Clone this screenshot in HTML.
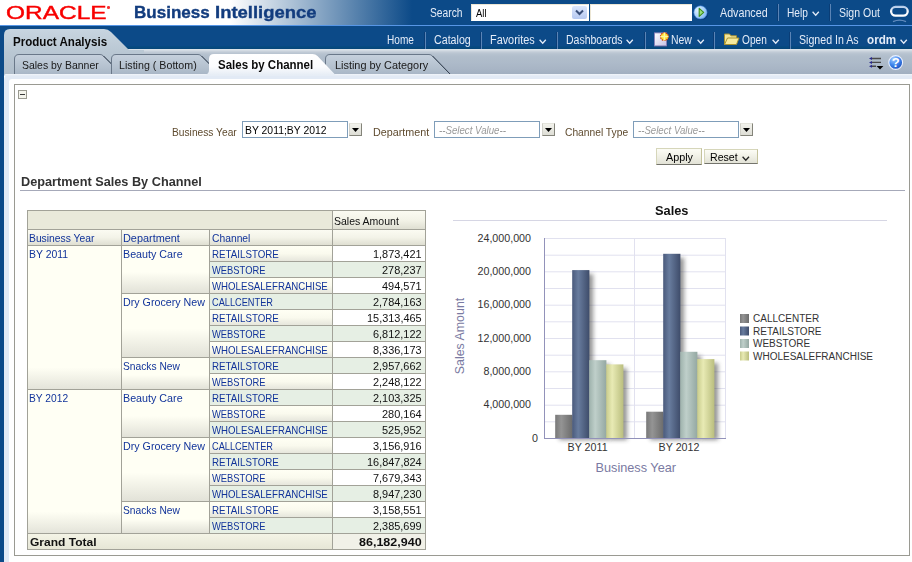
<!DOCTYPE html>
<html><head><meta charset="utf-8"><title>Oracle Business Intelligence</title>
<style>
html,body{margin:0;padding:0;}
body{width:912px;height:562px;position:relative;overflow:hidden;background:#fff;font-family:"Liberation Sans",sans-serif;font-size:11px;color:#000;}
.a{position:absolute;white-space:nowrap;}
.t{position:absolute;white-space:nowrap;line-height:14px;height:14px;transform-origin:0 50%;}
.sep{position:absolute;width:1px;height:17px;background:#5a84b6;box-shadow:-1px 0 0 #0a3d76;}
</style></head>
<body>
<div class="a" style="left:0;top:0;width:912px;height:25px;background:linear-gradient(90deg,#fff 0,#fff 230px,#0c4a88 412px,#0c4a88 912px);"></div>
<div class="a" style="left:0;top:25px;width:912px;height:1px;background:#5796e6;"></div>
<div class="a" style="left:0;top:26px;width:912px;height:23px;background:linear-gradient(#0c4a88 0,#0c4a88 19.5px,#074a82 20.5px,#064678 23px);"></div>
<div class="a" style="left:0;top:26px;width:4px;height:536px;background:#0c4a88;"></div>
<div class="t" id="oracle" style="left:6.0px;top:5.7px;font-size:17.6px;color:#f80000;transform:scaleX(1.390);-webkit-text-stroke:0.4px #f80000;">ORACLE</div>
<div class="a" style="left:107px;top:6px;width:2.6px;height:2.6px;border-radius:50%;background:#f83030;"></div>
<div class="t" id="bi" style="left:134.2px;top:6.0px;font-size:16.8px;color:#123c7e;font-weight:bold;transform:scaleX(1.016);-webkit-text-stroke:0.35px #123c7e;">Business</div>
<div class="t" id="bi2" style="left:215.4px;top:6.0px;font-size:16.8px;color:#123c7e;font-weight:bold;transform:scaleX(1.100);-webkit-text-stroke:0.35px #123c7e;">Intelligence</div>
<div class="t" id="search" style="left:429.5px;top:5.8px;font-size:12px;color:#e4ecf8;transform:scaleX(0.855);">Search</div>
<div class="a" style="left:471px;top:4px;width:118px;height:17px;background:#fff;border:1px solid #ece6d4;border-right-color:#fff;border-bottom-color:#fff;box-sizing:border-box;"></div>
<div class="t" id="all" style="left:476.0px;top:6.2px;font-size:11px;color:#000;transform:scaleX(0.858);">All</div>
<div class="a" style="left:572px;top:6px;width:15px;height:13px;background:linear-gradient(#dde7fc,#b6c9f1);border-radius:2px;"></div>
<svg class="a" style="left:572px;top:6px;" width="15" height="13"><path d="M4 4.5 L7.5 8 L11 4.5" fill="none" stroke="#3a4f7a" stroke-width="2"/></svg>
<div class="a" style="left:590px;top:4px;width:102px;height:17px;background:#fff;border:1px solid #ece6d4;border-right-color:#fff;border-bottom-color:#fff;box-sizing:border-box;"></div>
<svg class="a" style="left:692px;top:4px;" width="18" height="18"><defs><radialGradient id="gb" cx="0.3" cy="0.35" r="0.8"><stop offset="0" stop-color="#dcefff"/><stop offset="0.6" stop-color="#a4d0fa"/><stop offset="1" stop-color="#6aa8ec"/></radialGradient></defs><circle cx="9.2" cy="9.2" r="6.9" fill="#06306a" opacity="0.75"/><circle cx="8.5" cy="8.4" r="6.7" fill="url(#gb)" stroke="#2f74d0" stroke-width="0.6"/><path d="M7.2 4.4 L11.7 8.4 L7.2 12.4 Z" fill="#9be07a" stroke="#3c8e1c" stroke-width="1.1" stroke-linejoin="round"/></svg>
<div class="t" id="adv" style="left:719.8px;top:5.8px;font-size:12px;color:#e4ecf8;transform:scaleX(0.892);">Advanced</div>
<div class="sep" style="left:778px;top:4px;"></div>
<div class="t" id="help" style="left:786.5px;top:5.8px;font-size:12px;color:#e4ecf8;transform:scaleX(0.847);">Help</div>
<svg class="a" style="left:812px;top:11px;" width="9" height="6"><path d="M0.6 0.8 L3.7 4.2 L6.8 0.8" fill="none" stroke="#e4ecf8" stroke-width="1.3"/></svg>
<div class="sep" style="left:830px;top:4px;"></div>
<div class="t" id="signout" style="left:838.8px;top:5.8px;font-size:12px;color:#e4ecf8;transform:scaleX(0.876);">Sign Out</div>
<svg class="a" style="left:888px;top:3px;" width="24" height="21"><defs><linearGradient id="og" x1="0" y1="0" x2="0" y2="1"><stop offset="0" stop-color="#b4cbea"/><stop offset="0.45" stop-color="#f4f7fc"/><stop offset="1" stop-color="#ffffff"/></linearGradient></defs><rect x="3.1" y="3.9" width="16.6" height="8.8" rx="4.4" ry="4.4" fill="none" stroke="url(#og)" stroke-width="2.3"/><path d="M5 18.6 Q11.5 15.6 18 18.6" fill="none" stroke="#7fa2d0" stroke-width="1.4" opacity="0.75"/></svg>
<div class="t" id="home" style="left:387.1px;top:33.4px;font-size:12px;color:#e4ecf8;transform:scaleX(0.840);">Home</div>
<div class="sep" style="left:425px;top:32px;"></div>
<div class="t" id="catalog" style="left:433.5px;top:33.4px;font-size:12px;color:#e4ecf8;transform:scaleX(0.889);">Catalog</div>
<div class="sep" style="left:481px;top:32px;"></div>
<div class="t" id="fav" style="left:489.5px;top:33.4px;font-size:12px;color:#e4ecf8;transform:scaleX(0.906);">Favorites</div>
<svg class="a" style="left:539px;top:39px;" width="9" height="6"><path d="M0.6 0.8 L3.7 4.2 L6.8 0.8" fill="none" stroke="#e4ecf8" stroke-width="1.3"/></svg>
<div class="sep" style="left:557px;top:32px;"></div>
<div class="t" id="dash" style="left:565.6px;top:33.4px;font-size:12px;color:#e4ecf8;transform:scaleX(0.875);">Dashboards</div>
<svg class="a" style="left:626px;top:39px;" width="9" height="6"><path d="M0.6 0.8 L3.7 4.2 L6.8 0.8" fill="none" stroke="#e4ecf8" stroke-width="1.3"/></svg>
<div class="sep" style="left:645px;top:32px;"></div>
<svg class="a" style="left:653px;top:31px;" width="17" height="17"><defs><linearGradient id="dg" x1="0" y1="0" x2="1" y2="1"><stop offset="0" stop-color="#fff"/><stop offset="1" stop-color="#c4c0e4"/></linearGradient></defs><rect x="2.5" y="3.5" width="12" height="12.5" fill="#1d2f5c" opacity="0.35"/><rect x="1.5" y="1.9" width="12" height="13" fill="url(#dg)" stroke="#8a80b8" stroke-width="0.9"/><circle cx="11.4" cy="5.6" r="3.9" fill="#ffdf2a" stroke="#c8321a" stroke-width="1.2" stroke-dasharray="1.5 0.9"/><path d="M11.4 1.6V9.6M7.4 5.6H15.4" stroke="#fff8a0" stroke-width="1.5"/></svg>
<div class="t" id="new" style="left:671.3px;top:33.4px;font-size:12px;color:#e4ecf8;transform:scaleX(0.870);">New</div>
<svg class="a" style="left:696.7px;top:39px;" width="9" height="6"><path d="M0.6 0.8 L3.7 4.2 L6.8 0.8" fill="none" stroke="#e4ecf8" stroke-width="1.3"/></svg>
<div class="sep" style="left:714px;top:32px;"></div>
<svg class="a" style="left:723px;top:31px;" width="18" height="16"><path d="M1.5 13.5 V3 H6.5 L8 4.8 H13.5 V7" fill="#f3e59a" stroke="#a8922e" stroke-width="1"/><path d="M1.5 13.5 L4.5 7 H16 L13.5 13.5 Z" fill="#f6ea9e" stroke="#a8922e" stroke-width="1"/></svg>
<div class="t" id="open" style="left:742.0px;top:33.4px;font-size:12px;color:#e4ecf8;transform:scaleX(0.845);">Open</div>
<svg class="a" style="left:771.5px;top:39px;" width="9" height="6"><path d="M0.6 0.8 L3.7 4.2 L6.8 0.8" fill="none" stroke="#e4ecf8" stroke-width="1.3"/></svg>
<div class="sep" style="left:790px;top:32px;"></div>
<div class="t" id="signed" style="left:798.7px;top:33.4px;font-size:12px;color:#e4ecf8;transform:scaleX(0.884);">Signed In As</div>
<div class="t" id="ordm" style="left:866.7px;top:33.3px;font-size:12.5px;color:#e4ecf8;font-weight:bold;transform:scaleX(0.934);">ordm</div>
<svg class="a" style="left:900px;top:39px;" width="9" height="6"><path d="M0.6 0.8 L3.7 4.2 L6.8 0.8" fill="none" stroke="#e4ecf8" stroke-width="1.3"/></svg>
<div class="a" style="left:4px;top:49px;width:908px;height:26px;background:linear-gradient(#dfe5eb 0,#d3dbe3 1.5px,#c2ccd7 3px,#b6c2cf 5px,#b0bdcb 8px,#adbac9 14px,#a8b5c5 20px,#a1afc0 25px,#a1afc0 26px);"></div>
<svg class="a" style="left:4px;top:28px;" width="140" height="48"><defs><linearGradient id="pa" x1="0" y1="0" x2="0" y2="1"><stop offset="0" stop-color="#c8d5e0"/><stop offset="0.5" stop-color="#b9c7d3"/><stop offset="1" stop-color="#b0bdca"/></linearGradient></defs><path d="M0 48 V7 Q0 1 6 1 H100 Q104 1 107 4 L125 22 H140 V48 Z" fill="url(#pa)"/></svg>
<div class="t" id="prod" style="left:13.1px;top:34.7px;font-size:12px;color:#0a0a0a;font-weight:bold;transform:scaleX(0.964);">Product Analysis</div>
<svg class="a" style="left:14px;top:53px;" width="110" height="22"><defs><linearGradient id="gtb1" x1="0" y1="0" x2="0" y2="1"><stop offset="0" stop-color="#c6d1dd"/><stop offset="0.7" stop-color="#b2bfcd"/><stop offset="1" stop-color="#a7b5c5"/></linearGradient></defs><path d="M0.5 22 V6 Q0.5 1.5 5 1.5 H86 Q88 1.5 89.5 3 L97.5 11 V22 Z" fill="url(#gtb1)" stroke="#6a7889" stroke-width="1"/><path d="M89.5 3 L97.5 11" fill="none" stroke="#2f3b4b" stroke-width="0.9"/></svg>
<div class="t" id="tb1" style="left:22.2px;top:58.2px;font-size:11px;color:#1a1a1a;transform:scaleX(0.950);">Sales by Banner</div>
<svg class="a" style="left:111px;top:53px;" width="111" height="22"><defs><linearGradient id="gtb2" x1="0" y1="0" x2="0" y2="1"><stop offset="0" stop-color="#c6d1dd"/><stop offset="0.7" stop-color="#b2bfcd"/><stop offset="1" stop-color="#a7b5c5"/></linearGradient></defs><path d="M0.5 22 V6 Q0.5 1.5 5 1.5 H87 Q89 1.5 90.5 3 L98.5 11 V22 Z" fill="url(#gtb2)" stroke="#6a7889" stroke-width="1"/><path d="M90.5 3 L98.5 11" fill="none" stroke="#2f3b4b" stroke-width="0.9"/></svg>
<div class="t" id="tb2" style="left:119.0px;top:58.2px;font-size:11px;color:#1a1a1a;transform:scaleX(0.970);">Listing ( Bottom)</div>
<svg class="a" style="left:325px;top:53px;" width="128" height="22"><defs><linearGradient id="gtb4" x1="0" y1="0" x2="0" y2="1"><stop offset="0" stop-color="#c6d1dd"/><stop offset="0.7" stop-color="#b2bfcd"/><stop offset="1" stop-color="#a7b5c5"/></linearGradient></defs><path d="M0.5 22 V6 Q0.5 1.5 5 1.5 H104 Q106 1.5 107.5 3 L125.5 21.5 L125.5 22 Z" fill="url(#gtb4)" stroke="#6a7889" stroke-width="1"/><path d="M107.5 3 L125.5 21.5" fill="none" stroke="#2f3b4b" stroke-width="0.9"/></svg>
<div class="t" id="tb4" style="left:334.8px;top:58.2px;font-size:11px;color:#1a1a1a;transform:scaleX(0.990);">Listing by Category</div>
<div class="a" style="left:4px;top:74px;width:908px;height:488px;background:#e2eaf5;border-top-left-radius:6px;"></div>
<div class="a" style="left:9px;top:79px;width:903px;height:483px;background:#fff;border-top-left-radius:3px;"></div><div class="a" style="left:4px;top:74px;width:908px;height:2px;background:linear-gradient(#f1f5fa,#e2eaf5);border-top-left-radius:6px;"></div>
<svg class="a" style="left:201px;top:53px;" width="146.5" height="24"><defs><linearGradient id="ga" x1="0" y1="0" x2="0" y2="1"><stop offset="0" stop-color="#fff"/><stop offset="0.6" stop-color="#fbfcfe"/><stop offset="1" stop-color="#e6edf5"/></linearGradient></defs><path d="M4 22 Q8 21 8 17 V6 Q8 1 13 1 H111.5 Q114.5 1 116.5 3 L134.5 22 Z" fill="url(#ga)"/></svg>
<div class="t" id="tb3" style="left:218.0px;top:57.8px;font-size:12px;color:#0a0a0a;font-weight:bold;transform:scaleX(0.958);">Sales by Channel</div>
<svg class="a" style="left:867px;top:55px;" width="18" height="16"><path d="M5 3.5H14M5 7.4H14M5 11.3H9" stroke="#4a4a4a" stroke-width="1.4"/><path d="M2 3.5 L5 2 V5Z M2 7.4 L5 5.9 V8.9Z M2 11.3 L5 9.8 V12.8Z" fill="#2a2a8a"/><path d="M9.6 11 H16.4 L13 14.6 Z" fill="#000"/></svg>
<svg class="a" style="left:887px;top:54px;" width="18" height="18"><defs><radialGradient id="hb" cx="0.35" cy="0.25" r="0.85"><stop offset="0" stop-color="#a4ccff"/><stop offset="0.5" stop-color="#3f86ee"/><stop offset="1" stop-color="#1646b4"/></radialGradient></defs><circle cx="8.7" cy="8.5" r="6.9" fill="url(#hb)" stroke="#eaf1ff" stroke-width="1.1"/><text x="8.7" y="13" text-anchor="middle" font-family="Liberation Sans, sans-serif" font-weight="bold" font-size="13" fill="#fff">?</text></svg>
<div class="a" style="left:14px;top:84px;width:896px;height:472px;border:1px solid #9a9a92;box-sizing:border-box;background:#fff;"></div>
<div class="a" style="left:18px;top:90px;width:9px;height:9px;box-sizing:border-box;border:1px solid #9a9a90;background:#f4f4ec;"></div><div class="a" style="left:20px;top:94px;width:5px;height:1px;background:#3a3a3a;"></div>
<div class="t" id="by" style="left:171.5px;top:125.2px;font-size:11px;color:#5e4a2e;transform:scaleX(0.929);">Business Year</div>
<div class="a" style="left:242px;top:121px;width:106px;height:17px;box-sizing:border-box;border:1px solid #7f9db9;background:#fff;"></div>
<div class="t" id="byv" style="left:244.5px;top:123.0px;font-size:11px;color:#000;transform:scaleX(0.945);">BY 2011;BY 2012</div>
<div class="a" style="left:349px;top:123px;width:13px;height:13px;box-sizing:border-box;border:1px solid #84847a;border-top-color:#e4e4dc;border-left-color:#d0d0c8;background:linear-gradient(#f2f2ec,#deded6);"></div><svg class="a" style="left:352px;top:128px;" width="7" height="4"><path d="M0 0H7L3.5 4Z" fill="#000"/></svg>
<div class="t" id="dept" style="left:372.8px;top:125.2px;font-size:11px;color:#5e4a2e;transform:scaleX(0.978);">Department</div>
<div class="a" style="left:434px;top:121px;width:106px;height:17px;box-sizing:border-box;border:1px solid #7f9db9;background:#fff;"></div>
<div class="t" id="sv1" style="left:439.0px;top:123.0px;font-size:11px;color:#9a9a9a;font-style:italic;transform:scaleX(0.881);">--Select Value--</div>
<div class="a" style="left:542px;top:123px;width:13px;height:13px;box-sizing:border-box;border:1px solid #84847a;border-top-color:#e4e4dc;border-left-color:#d0d0c8;background:linear-gradient(#f2f2ec,#deded6);"></div><svg class="a" style="left:545px;top:128px;" width="7" height="4"><path d="M0 0H7L3.5 4Z" fill="#000"/></svg>
<div class="t" id="ct" style="left:564.9px;top:125.2px;font-size:11px;color:#5e4a2e;transform:scaleX(0.932);">Channel Type</div>
<div class="a" style="left:633px;top:121px;width:106px;height:17px;box-sizing:border-box;border:1px solid #7f9db9;background:#fff;"></div>
<div class="t" id="sv2" style="left:638.3px;top:123.0px;font-size:11px;color:#9a9a9a;font-style:italic;transform:scaleX(0.877);">--Select Value--</div>
<div class="a" style="left:740px;top:123px;width:13px;height:13px;box-sizing:border-box;border:1px solid #84847a;border-top-color:#e4e4dc;border-left-color:#d0d0c8;background:linear-gradient(#f2f2ec,#deded6);"></div><svg class="a" style="left:743px;top:128px;" width="7" height="4"><path d="M0 0H7L3.5 4Z" fill="#000"/></svg>
<div class="a" style="left:656px;top:148px;width:46px;height:17px;box-sizing:border-box;border:1px solid #c4c29c;border-top-color:#d6d6ba;border-left-color:#d6d6ba;border-bottom-color:#74746c;background:linear-gradient(#fcfcf5,#f0f0e6 50%,#e2e2d6);"></div>
<div class="t" id="apply" style="left:665.6px;top:149.5px;font-size:11px;color:#000;transform:scaleX(0.981);">Apply</div>
<div class="a" style="left:704px;top:149px;width:54px;height:15px;box-sizing:border-box;border:1px solid #c4c29c;border-top-color:#d6d6ba;border-left-color:#d6d6ba;border-bottom-color:#74746c;background:linear-gradient(#fcfcf5,#f0f0e6 50%,#e2e2d6);"></div>
<div class="t" id="reset" style="left:710.3px;top:149.5px;font-size:11px;color:#000;transform:scaleX(0.963);">Reset</div>
<svg class="a" style="left:741.8px;top:156px;" width="9" height="6"><path d="M0.6 0.8 L3.8 4.2 L7.0 0.8" fill="none" stroke="#222" stroke-width="1.3"/></svg>
<div class="t" id="dsc" style="left:21.3px;top:175.4px;font-size:13px;color:#333;font-weight:bold;transform:scaleX(0.978);">Department Sales By Channel</div>
<div class="a" style="left:20px;top:190px;width:885px;height:1px;background:#a6a9b9;"></div>
<div class="a" style="left:27px;top:210px;width:399px;height:340px;background:#a2a298;"></div>
<div class="a" style="left:28px;top:211px;width:304px;height:18px;background:#e9e9da;"></div>
<div class="a" style="left:333px;top:211px;width:92px;height:18px;background:linear-gradient(#fbfbf2 0,#f3f3e8 50%,#dfdfd2 100%);"></div>
<div class="a" style="left:28px;top:230px;width:93px;height:15px;background:linear-gradient(#fbfbf2 0,#f3f3e8 50%,#dfdfd2 100%);"></div>
<div class="a" style="left:122px;top:230px;width:87px;height:15px;background:linear-gradient(#fbfbf2 0,#f3f3e8 50%,#dfdfd2 100%);"></div>
<div class="a" style="left:210px;top:230px;width:122px;height:15px;background:linear-gradient(#fbfbf2 0,#f3f3e8 50%,#dfdfd2 100%);"></div>
<div class="a" style="left:333px;top:230px;width:92px;height:15px;background:linear-gradient(#fbfbf2 0,#f3f3e8 50%,#dfdfd2 100%);"></div>
<div class="t" id="sa" style="left:334.4px;top:214.4px;font-size:11px;color:#111;transform:scaleX(0.955);">Sales Amount</div>
<div class="t" id="h1" style="left:29.4px;top:231.2px;font-size:11px;color:#12349a;transform:scaleX(0.938);">Business Year</div>
<div class="t" id="h2" style="left:123.4px;top:231.2px;font-size:11px;color:#12349a;transform:scaleX(0.990);">Department</div>
<div class="t" id="h3" style="left:212.0px;top:231.2px;font-size:11px;color:#12349a;transform:scaleX(0.937);">Channel</div>
<div class="a" style="left:28px;top:246px;width:93px;height:143px;background:linear-gradient(#fffff4 0,#fffff4 85%,#e4e4da 100%);"></div>
<div class="a" style="left:28px;top:390px;width:93px;height:143px;background:linear-gradient(#fffff4 0,#fffff4 85%,#e4e4da 100%);"></div>
<div class="t" id="y1" style="left:29.4px;top:247.2px;font-size:11px;color:#12349a;transform:scaleX(0.949);">BY 2011</div>
<div class="t" id="y2" style="left:29.4px;top:391.2px;font-size:11px;color:#12349a;transform:scaleX(0.931);">BY 2012</div>
<div class="a" style="left:122px;top:246px;width:87px;height:47px;background:linear-gradient(#fffff4 0,#fffff4 55%,#e2e2d8 100%);"></div>
<div class="t" id="d0" style="left:123.4px;top:247.2px;font-size:11px;color:#12349a;transform:scaleX(0.975);">Beauty Care</div>
<div class="a" style="left:122px;top:294px;width:87px;height:63px;background:linear-gradient(#fffff4 0,#fffff4 55%,#e2e2d8 100%);"></div>
<div class="t" id="d1" style="left:123.4px;top:295.2px;font-size:11px;color:#12349a;transform:scaleX(0.971);">Dry Grocery New</div>
<div class="a" style="left:122px;top:358px;width:87px;height:31px;background:linear-gradient(#fffff4 0,#fffff4 55%,#e2e2d8 100%);"></div>
<div class="t" id="d2" style="left:123.4px;top:359.2px;font-size:11px;color:#12349a;transform:scaleX(0.931);">Snacks New</div>
<div class="a" style="left:122px;top:390px;width:87px;height:47px;background:linear-gradient(#fffff4 0,#fffff4 55%,#e2e2d8 100%);"></div>
<div class="t" id="d3" style="left:123.4px;top:391.2px;font-size:11px;color:#12349a;transform:scaleX(0.975);">Beauty Care</div>
<div class="a" style="left:122px;top:438px;width:87px;height:63px;background:linear-gradient(#fffff4 0,#fffff4 55%,#e2e2d8 100%);"></div>
<div class="t" id="d4" style="left:123.4px;top:439.2px;font-size:11px;color:#12349a;transform:scaleX(0.971);">Dry Grocery New</div>
<div class="a" style="left:122px;top:502px;width:87px;height:31px;background:linear-gradient(#fffff4 0,#fffff4 55%,#e2e2d8 100%);"></div>
<div class="t" id="d5" style="left:123.4px;top:503.2px;font-size:11px;color:#12349a;transform:scaleX(0.931);">Snacks New</div>
<div class="a" style="left:210px;top:246px;width:122px;height:15px;background:linear-gradient(#fffff4 0,#fafaee 50%,#e6e6dc 100%);"></div>
<div class="a" style="left:333px;top:246px;width:92px;height:15px;background:#fff;"></div>
<div class="t" id="c0" style="left:212.0px;top:247.2px;font-size:11px;color:#12349a;transform:scaleX(0.887);">RETAILSTORE</div>
<div class="t" id="v0" style="left:372.8px;top:247.2px;font-size:11px;color:#111;transform:scaleX(0.993);">1,873,421</div>
<div class="a" style="left:210px;top:262px;width:122px;height:15px;background:#e6efe4;"></div>
<div class="a" style="left:333px;top:262px;width:92px;height:15px;background:#e6efe4;"></div>
<div class="t" id="c1" style="left:212.0px;top:263.2px;font-size:11px;color:#12349a;transform:scaleX(0.852);">WEBSTORE</div>
<div class="t" id="v1" style="left:381.8px;top:263.2px;font-size:11px;color:#111;transform:scaleX(0.996);">278,237</div>
<div class="a" style="left:210px;top:278px;width:122px;height:15px;background:linear-gradient(#fffff4 0,#fafaee 50%,#e6e6dc 100%);"></div>
<div class="a" style="left:333px;top:278px;width:92px;height:15px;background:#fff;"></div>
<div class="t" id="c2" style="left:212.0px;top:279.2px;font-size:11px;color:#12349a;transform:scaleX(0.877);">WHOLESALEFRANCHISE</div>
<div class="t" id="v2" style="left:381.8px;top:279.2px;font-size:11px;color:#111;transform:scaleX(0.996);">494,571</div>
<div class="a" style="left:210px;top:294px;width:122px;height:15px;background:#e6efe4;"></div>
<div class="a" style="left:333px;top:294px;width:92px;height:15px;background:#e6efe4;"></div>
<div class="t" id="c3" style="left:212.0px;top:295.2px;font-size:11px;color:#12349a;transform:scaleX(0.838);">CALLCENTER</div>
<div class="t" id="v3" style="left:372.8px;top:295.2px;font-size:11px;color:#111;transform:scaleX(0.993);">2,784,163</div>
<div class="a" style="left:210px;top:310px;width:122px;height:15px;background:linear-gradient(#fffff4 0,#fafaee 50%,#e6e6dc 100%);"></div>
<div class="a" style="left:333px;top:310px;width:92px;height:15px;background:#fff;"></div>
<div class="t" id="c4" style="left:212.0px;top:311.2px;font-size:11px;color:#12349a;transform:scaleX(0.887);">RETAILSTORE</div>
<div class="t" id="v4" style="left:366.8px;top:311.2px;font-size:11px;color:#111;transform:scaleX(0.992);">15,313,465</div>
<div class="a" style="left:210px;top:326px;width:122px;height:15px;background:#e6efe4;"></div>
<div class="a" style="left:333px;top:326px;width:92px;height:15px;background:#e6efe4;"></div>
<div class="t" id="c5" style="left:212.0px;top:327.2px;font-size:11px;color:#12349a;transform:scaleX(0.852);">WEBSTORE</div>
<div class="t" id="v5" style="left:372.8px;top:327.2px;font-size:11px;color:#111;transform:scaleX(0.993);">6,812,122</div>
<div class="a" style="left:210px;top:342px;width:122px;height:15px;background:linear-gradient(#fffff4 0,#fafaee 50%,#e6e6dc 100%);"></div>
<div class="a" style="left:333px;top:342px;width:92px;height:15px;background:#fff;"></div>
<div class="t" id="c6" style="left:212.0px;top:343.2px;font-size:11px;color:#12349a;transform:scaleX(0.877);">WHOLESALEFRANCHISE</div>
<div class="t" id="v6" style="left:372.8px;top:343.2px;font-size:11px;color:#111;transform:scaleX(0.993);">8,336,173</div>
<div class="a" style="left:210px;top:358px;width:122px;height:15px;background:#e6efe4;"></div>
<div class="a" style="left:333px;top:358px;width:92px;height:15px;background:#e6efe4;"></div>
<div class="t" id="c7" style="left:212.0px;top:359.2px;font-size:11px;color:#12349a;transform:scaleX(0.887);">RETAILSTORE</div>
<div class="t" id="v7" style="left:372.8px;top:359.2px;font-size:11px;color:#111;transform:scaleX(0.993);">2,957,662</div>
<div class="a" style="left:210px;top:374px;width:122px;height:15px;background:linear-gradient(#fffff4 0,#fafaee 50%,#e6e6dc 100%);"></div>
<div class="a" style="left:333px;top:374px;width:92px;height:15px;background:#fff;"></div>
<div class="t" id="c8" style="left:212.0px;top:375.2px;font-size:11px;color:#12349a;transform:scaleX(0.852);">WEBSTORE</div>
<div class="t" id="v8" style="left:372.8px;top:375.2px;font-size:11px;color:#111;transform:scaleX(0.993);">2,248,122</div>
<div class="a" style="left:210px;top:390px;width:122px;height:15px;background:#e6efe4;"></div>
<div class="a" style="left:333px;top:390px;width:92px;height:15px;background:#e6efe4;"></div>
<div class="t" id="c9" style="left:212.0px;top:391.2px;font-size:11px;color:#12349a;transform:scaleX(0.887);">RETAILSTORE</div>
<div class="t" id="v9" style="left:372.8px;top:391.2px;font-size:11px;color:#111;transform:scaleX(0.993);">2,103,325</div>
<div class="a" style="left:210px;top:406px;width:122px;height:15px;background:linear-gradient(#fffff4 0,#fafaee 50%,#e6e6dc 100%);"></div>
<div class="a" style="left:333px;top:406px;width:92px;height:15px;background:#fff;"></div>
<div class="t" id="c10" style="left:212.0px;top:407.2px;font-size:11px;color:#12349a;transform:scaleX(0.852);">WEBSTORE</div>
<div class="t" id="v10" style="left:381.8px;top:407.2px;font-size:11px;color:#111;transform:scaleX(0.996);">280,164</div>
<div class="a" style="left:210px;top:422px;width:122px;height:15px;background:#e6efe4;"></div>
<div class="a" style="left:333px;top:422px;width:92px;height:15px;background:#e6efe4;"></div>
<div class="t" id="c11" style="left:212.0px;top:423.2px;font-size:11px;color:#12349a;transform:scaleX(0.877);">WHOLESALEFRANCHISE</div>
<div class="t" id="v11" style="left:381.8px;top:423.2px;font-size:11px;color:#111;transform:scaleX(0.996);">525,952</div>
<div class="a" style="left:210px;top:438px;width:122px;height:15px;background:linear-gradient(#fffff4 0,#fafaee 50%,#e6e6dc 100%);"></div>
<div class="a" style="left:333px;top:438px;width:92px;height:15px;background:#fff;"></div>
<div class="t" id="c12" style="left:212.0px;top:439.2px;font-size:11px;color:#12349a;transform:scaleX(0.838);">CALLCENTER</div>
<div class="t" id="v12" style="left:372.8px;top:439.2px;font-size:11px;color:#111;transform:scaleX(0.993);">3,156,916</div>
<div class="a" style="left:210px;top:454px;width:122px;height:15px;background:#e6efe4;"></div>
<div class="a" style="left:333px;top:454px;width:92px;height:15px;background:#e6efe4;"></div>
<div class="t" id="c13" style="left:212.0px;top:455.2px;font-size:11px;color:#12349a;transform:scaleX(0.887);">RETAILSTORE</div>
<div class="t" id="v13" style="left:366.8px;top:455.2px;font-size:11px;color:#111;transform:scaleX(0.992);">16,847,824</div>
<div class="a" style="left:210px;top:470px;width:122px;height:15px;background:linear-gradient(#fffff4 0,#fafaee 50%,#e6e6dc 100%);"></div>
<div class="a" style="left:333px;top:470px;width:92px;height:15px;background:#fff;"></div>
<div class="t" id="c14" style="left:212.0px;top:471.2px;font-size:11px;color:#12349a;transform:scaleX(0.852);">WEBSTORE</div>
<div class="t" id="v14" style="left:372.8px;top:471.2px;font-size:11px;color:#111;transform:scaleX(0.993);">7,679,343</div>
<div class="a" style="left:210px;top:486px;width:122px;height:15px;background:#e6efe4;"></div>
<div class="a" style="left:333px;top:486px;width:92px;height:15px;background:#e6efe4;"></div>
<div class="t" id="c15" style="left:212.0px;top:487.2px;font-size:11px;color:#12349a;transform:scaleX(0.877);">WHOLESALEFRANCHISE</div>
<div class="t" id="v15" style="left:372.8px;top:487.2px;font-size:11px;color:#111;transform:scaleX(0.993);">8,947,230</div>
<div class="a" style="left:210px;top:502px;width:122px;height:15px;background:linear-gradient(#fffff4 0,#fafaee 50%,#e6e6dc 100%);"></div>
<div class="a" style="left:333px;top:502px;width:92px;height:15px;background:#fff;"></div>
<div class="t" id="c16" style="left:212.0px;top:503.2px;font-size:11px;color:#12349a;transform:scaleX(0.887);">RETAILSTORE</div>
<div class="t" id="v16" style="left:372.8px;top:503.2px;font-size:11px;color:#111;transform:scaleX(0.993);">3,158,551</div>
<div class="a" style="left:210px;top:518px;width:122px;height:15px;background:#e6efe4;"></div>
<div class="a" style="left:333px;top:518px;width:92px;height:15px;background:#e6efe4;"></div>
<div class="t" id="c17" style="left:212.0px;top:519.2px;font-size:11px;color:#12349a;transform:scaleX(0.852);">WEBSTORE</div>
<div class="t" id="v17" style="left:372.8px;top:519.2px;font-size:11px;color:#111;transform:scaleX(0.993);">2,385,699</div>
<div class="a" style="left:28px;top:534px;width:304px;height:15px;background:linear-gradient(#f4f4e6,#e6e6d6);"></div>
<div class="a" style="left:333px;top:534px;width:92px;height:15px;background:#f1f1e8;"></div>
<div class="t" id="gt" style="left:29.9px;top:535.2px;font-size:11px;color:#111;font-weight:bold;transform:scaleX(1.093);">Grand Total</div>
<div class="t" id="gtv" style="left:359.4px;top:535.2px;font-size:11px;color:#111;font-weight:bold;transform:scaleX(1.137);">86,182,940</div>
<div class="t" id="sales" style="left:654.5px;top:203.5px;font-size:13px;color:#111;font-weight:bold;transform:scaleX(0.986);">Sales</div>
<div class="a" style="left:453px;top:220px;width:434px;height:1px;background:#d6d6e4;"></div>
<svg class="a" style="left:0;top:0;" width="912" height="562"><defs>
<linearGradient id="b0" x1="0" x2="1" y1="0" y2="0"><stop offset="0" stop-color="#787878"/><stop offset="0.35" stop-color="#949494"/><stop offset="1" stop-color="#6c6c6c"/></linearGradient>
<linearGradient id="b1" x1="0" x2="1" y1="0" y2="0"><stop offset="0" stop-color="#4a5a7c"/><stop offset="0.35" stop-color="#687c9e"/><stop offset="1" stop-color="#3e4c6a"/></linearGradient>
<linearGradient id="b2" x1="0" x2="1" y1="0" y2="0"><stop offset="0" stop-color="#9eb2ac"/><stop offset="0.35" stop-color="#bfcfca"/><stop offset="1" stop-color="#94a8a2"/></linearGradient>
<linearGradient id="b3" x1="0" x2="1" y1="0" y2="0"><stop offset="0" stop-color="#c8cc8c"/><stop offset="0.35" stop-color="#e8eab4"/><stop offset="1" stop-color="#babe7e"/></linearGradient>
<filter id="sh" x="-0.5" y="-0.1" width="2" height="1.3"><feGaussianBlur stdDeviation="2"/></filter>
</defs><line x1="544" x2="725" y1="438.5" y2="438.5" stroke="#e1e1ef" stroke-width="1"/><line x1="544" x2="725" y1="421.8" y2="421.8" stroke="#e1e1ef" stroke-width="1"/><line x1="544" x2="725" y1="405.2" y2="405.2" stroke="#e1e1ef" stroke-width="1"/><line x1="544" x2="725" y1="388.5" y2="388.5" stroke="#e1e1ef" stroke-width="1"/><line x1="544" x2="725" y1="371.8" y2="371.8" stroke="#e1e1ef" stroke-width="1"/><line x1="544" x2="725" y1="355.2" y2="355.2" stroke="#e1e1ef" stroke-width="1"/><line x1="544" x2="725" y1="338.5" y2="338.5" stroke="#e1e1ef" stroke-width="1"/><line x1="544" x2="725" y1="321.8" y2="321.8" stroke="#e1e1ef" stroke-width="1"/><line x1="544" x2="725" y1="305.2" y2="305.2" stroke="#e1e1ef" stroke-width="1"/><line x1="544" x2="725" y1="288.5" y2="288.5" stroke="#e1e1ef" stroke-width="1"/><line x1="544" x2="725" y1="271.8" y2="271.8" stroke="#e1e1ef" stroke-width="1"/><line x1="544" x2="725" y1="255.2" y2="255.2" stroke="#e1e1ef" stroke-width="1"/><line x1="544" x2="725" y1="238.5" y2="238.5" stroke="#e1e1ef" stroke-width="1"/><line x1="634.5" x2="634.5" y1="238" y2="438" stroke="#e1e1ef" stroke-width="1"/><line x1="725.5" x2="725.5" y1="238" y2="438" stroke="#e1e1ef" stroke-width="1"/><rect x="559.2" y="418.8" width="17.0" height="21.2" fill="#333" opacity="0.5" filter="url(#sh)"/><rect x="576.2" y="274.1" width="17.0" height="165.9" fill="#333" opacity="0.5" filter="url(#sh)"/><rect x="593.2" y="364.2" width="17.0" height="75.8" fill="#333" opacity="0.5" filter="url(#sh)"/><rect x="610.2" y="368.4" width="17.0" height="71.6" fill="#333" opacity="0.5" filter="url(#sh)"/><rect x="650.2" y="415.7" width="17.0" height="24.3" fill="#333" opacity="0.5" filter="url(#sh)"/><rect x="667.2" y="257.8" width="17.0" height="182.2" fill="#333" opacity="0.5" filter="url(#sh)"/><rect x="684.2" y="355.8" width="17.0" height="84.2" fill="#333" opacity="0.5" filter="url(#sh)"/><rect x="701.2" y="363.1" width="17.0" height="76.9" fill="#333" opacity="0.5" filter="url(#sh)"/><rect x="555.2" y="414.8" width="17.2" height="23.2" fill="url(#b0)"/><rect x="572.2" y="270.1" width="17.2" height="167.9" fill="url(#b1)"/><rect x="589.2" y="360.2" width="17.2" height="77.8" fill="url(#b2)"/><rect x="606.2" y="364.4" width="17.2" height="73.6" fill="url(#b3)"/><rect x="646.2" y="411.7" width="17.2" height="26.3" fill="url(#b0)"/><rect x="663.2" y="253.8" width="17.2" height="184.2" fill="url(#b1)"/><rect x="680.2" y="351.8" width="17.2" height="86.2" fill="url(#b2)"/><rect x="697.2" y="359.1" width="17.2" height="78.9" fill="url(#b3)"/><line x1="544.5" x2="544.5" y1="238" y2="439" stroke="#9292ba" stroke-width="1"/><line x1="544" x2="726" y1="438.5" y2="438.5" stroke="#9292ba" stroke-width="1"/><text x="538" y="441.6" text-anchor="end" font-family="Liberation Sans, sans-serif" font-size="10.7" fill="#333">0</text><text x="531" y="408.3" text-anchor="end" font-family="Liberation Sans, sans-serif" font-size="10.7" fill="#333">4,000,000</text><text x="531" y="374.9" text-anchor="end" font-family="Liberation Sans, sans-serif" font-size="10.7" fill="#333">8,000,000</text><text x="531" y="341.6" text-anchor="end" font-family="Liberation Sans, sans-serif" font-size="10.7" fill="#333">12,000,000</text><text x="531" y="308.3" text-anchor="end" font-family="Liberation Sans, sans-serif" font-size="10.7" fill="#333">16,000,000</text><text x="531" y="274.9" text-anchor="end" font-family="Liberation Sans, sans-serif" font-size="10.7" fill="#333">20,000,000</text><text x="531" y="241.6" text-anchor="end" font-family="Liberation Sans, sans-serif" font-size="10.7" fill="#333">24,000,000</text><text x="587.6" y="451.3" text-anchor="middle" font-family="Liberation Sans, sans-serif" font-size="10.7" fill="#333">BY 2011</text><text x="679" y="451.3" text-anchor="middle" font-family="Liberation Sans, sans-serif" font-size="10.7" fill="#333">BY 2012</text><text x="635.8" y="472" text-anchor="middle" font-family="Liberation Sans, sans-serif" font-size="12.7" fill="#7a7aa2">Business Year</text><text transform="translate(463.6,336) rotate(-90)" text-anchor="middle" font-family="Liberation Sans, sans-serif" font-size="12.4" fill="#7a7aa2">Sales Amount</text><rect x="740" y="314.0" width="9" height="9" fill="url(#b0)"/><text x="753" y="322.3" font-family="Liberation Sans, sans-serif" font-size="10" fill="#333">CALLCENTER</text><rect x="740" y="326.5" width="9" height="9" fill="url(#b1)"/><text x="753" y="334.8" font-family="Liberation Sans, sans-serif" font-size="10" fill="#333">RETAILSTORE</text><rect x="740" y="339.0" width="9" height="9" fill="url(#b2)"/><text x="753" y="347.3" font-family="Liberation Sans, sans-serif" font-size="10" fill="#333">WEBSTORE</text><rect x="740" y="351.5" width="9" height="9" fill="url(#b3)"/><text x="753" y="359.8" font-family="Liberation Sans, sans-serif" font-size="10" fill="#333">WHOLESALEFRANCHISE</text></svg>
</body></html>
